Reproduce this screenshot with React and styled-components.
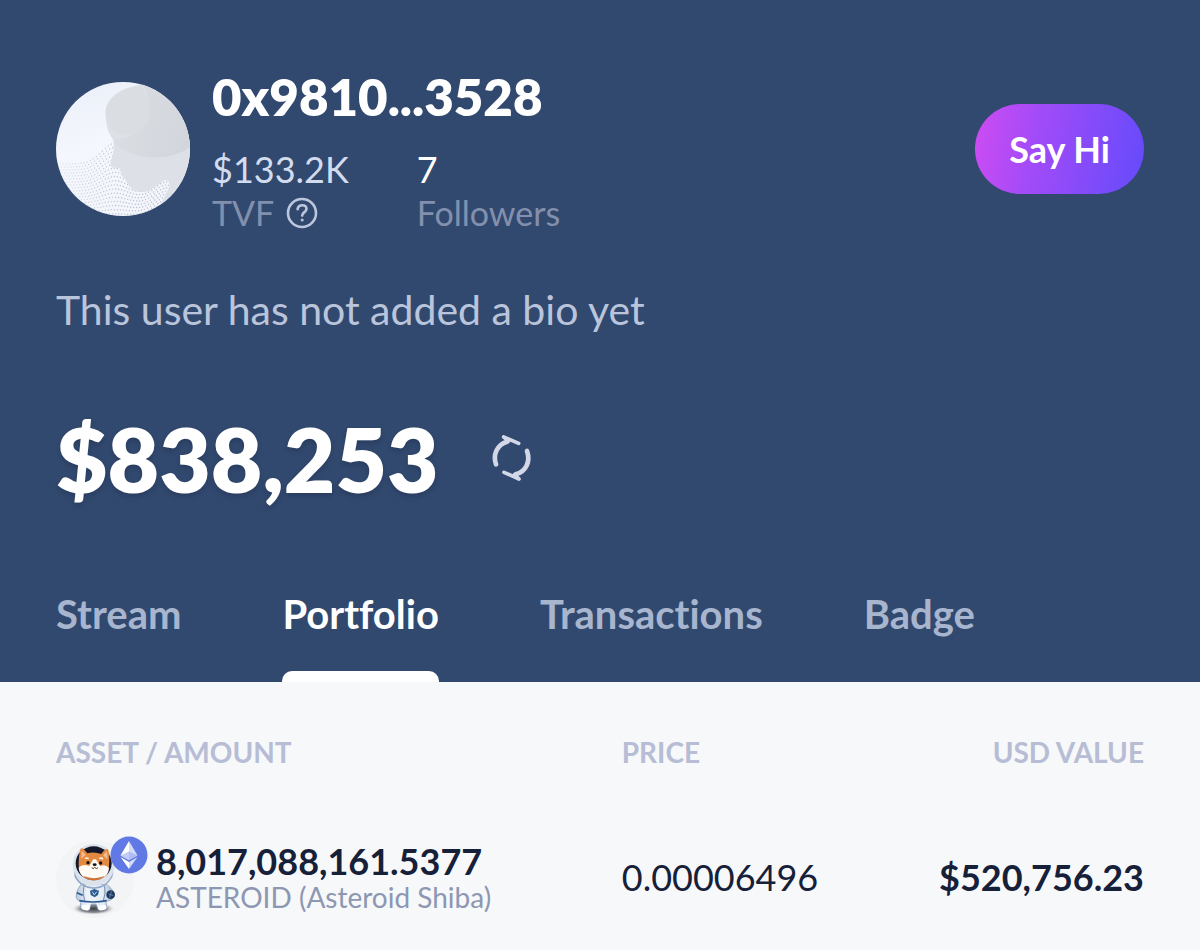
import React, { useState } from 'react'
import styled, { createGlobalStyle } from 'styled-components';

const GlobalStyle = createGlobalStyle`
    * {
        box-sizing: border-box;
    }

    body {
        margin: 0;
        background-color: #f6f8fa;
        font-family: Lato, "Liberation Sans", sans-serif;
        font-variant-ligatures: none;
    }
`;

const Header = styled.header`
    background-color: #32496f;
    padding: 67px 56px 0;
`;

const Profile = styled.div`
    display: flex;
    align-items: flex-start;
`;

const AvatarSvg = styled.svg`
    flex: none;
    width: 134px;
    height: 134px;
    margin-top: 15px;
    margin-right: 22px;
`;

const Identity = styled.div`
    flex: 1;
`;

const Address = styled.h1`
    margin: 0 0 20px;
    font-size: 51px;
    line-height: 60px;
    font-weight: 800;
    color: #ffffff;
`;

const Stats = styled.dl`
    display: flex;
    gap: 68px;
    margin: 0;
`;

const Stat = styled.div`
    display: flex;
    flex-direction: column-reverse;
`;

const StatValue = styled.dd`
    margin: 0;
    font-size: 36px;
    line-height: 44px;
    color: ${(props) => props.$color};
`;

const StatLabel = styled.dt`
    display: flex;
    align-items: center;
    gap: 12px;
    font-size: 34px;
    line-height: 44px;
    color: #8290ae;
`;

const HelpButton = styled.button`
    display: flex;
    padding: 0;
    border: none;
    background: none;
    color: #bcc7dd;
    cursor: pointer;
`;

const SayHi = styled.button`
    margin-top: 37px;
    padding: 0 34px;
    height: 90px;
    border: none;
    border-radius: 45px;
    background: linear-gradient(100deg, #cf4cf2 0%, #a34bf8 35%, #644bfb 100%);
    color: #ffffff;
    font-family: inherit;
    font-size: 36px;
    font-weight: 700;
    cursor: pointer;
`;

const Bio = styled.p`
    margin: 49px 0 0;
    font-size: 41px;
    line-height: 52px;
    color: #bac5db;
`;

const Balance = styled.div`
    display: flex;
    align-items: center;
    gap: 52px;
    margin-top: 70px;
`;

const Total = styled.div`
    font-size: 89px;
    line-height: 106px;
    font-weight: 800;
    color: #ffffff;
    text-shadow: 0 3px 5px rgba(20, 32, 60, 0.3);
`;

const RefreshButton = styled.button`
    display: flex;
    padding: 0;
    border: none;
    background: none;
    cursor: pointer;
`;

const Tabs = styled.nav`
    display: flex;
    gap: 101px;
    margin-top: 76px;
`;

const Tab = styled.button`
    display: flex;
    flex-direction: column;
    justify-content: space-between;
    height: 94px;
    padding: 0;
    border: none;
    background: none;
    font-family: inherit;
    font-variant-ligatures: inherit;
    font-size: 40px;
    line-height: 52px;
    font-weight: 700;
    color: ${(props) => (props.$active ? '#ffffff' : '#a8b5ce')};
    cursor: pointer;

    &::after {
        content: '';
        width: 100%;
        height: 11px;
        border-radius: 10px 10px 0 0;
        background-color: ${(props) => (props.$active ? '#ffffff' : 'transparent')};
    }
`;

const Holdings = styled.main`
    padding: 50px 56px 28px;
`;

const AssetTable = styled.table`
    width: 100%;
    table-layout: fixed;
    border-collapse: collapse;
`;

const HeadCell = styled.th`
    width: ${(props) => props.$width};
    padding: 0 0 64px;
    font-size: 28px;
    line-height: 40px;
    font-weight: 700;
    text-align: ${(props) => props.$align || 'left'};
    color: #b7bdd4;
`;

const Cell = styled.td`
    padding: 0;
    font-size: 36px;
    line-height: 44px;
    font-weight: ${(props) => (props.$bold ? 700 : 400)};
    text-align: ${(props) => props.$align || 'left'};
    color: #162039;
`;

const Asset = styled.div`
    display: flex;
    align-items: center;
    gap: 8px;
`;

const TokenIcon = styled.div`
    position: relative;
    flex: none;
    width: 92px;
    height: 82px;
`;

const ChainBadge = styled.svg`
    position: absolute;
    top: 0;
    right: 0;
    width: 38px;
    height: 38px;
`;

const Amount = styled.div`
    font-size: 36px;
    line-height: 40px;
    font-weight: 700;
    color: #162039;
`;

const TokenName = styled.div`
    font-size: 28px;
    line-height: 32px;
    color: #8d97b1;
`;

const tabs = ['Stream', 'Portfolio', 'Transactions', 'Badge'];

const assets = [
    {
        amount: '8,017,088,161.5377',
        name: 'ASTEROID (Asteroid Shiba)',
        price: '0.00006496',
        value: '$520,756.23'
    }
];

//rows of small dots that rise towards the face and the shoulder
const avatarDots = () => {
    let dots = [];
    for(let row = 0; row < 24; row++){
        for(let col = 0; col < 42; col++){
            const x = 22 + col * 9 + (row % 2) * 4;
            const face = 62 * Math.exp(-Math.pow((x - 195) / 55, 2)) * Math.max(0, 1 - row / 18);
            const shoulder = 45 * Math.exp(-Math.pow((x - 350) / 50, 2));
            const y = 258 + row * 9 - face - shoulder;
            dots.push({ x, y, opacity: Math.min(1, 0.2 + x / 260) });
        }
    }
    return dots;
}

const Avatar = () => (
    <AvatarSvg viewBox="18 12 402 402" aria-hidden="true">
        <defs>
            <clipPath id="avatarClip"><circle cx="219" cy="213" r="201" /></clipPath>
            <linearGradient id="avatarBg" x1="0" y1="0" x2="0.4" y2="1">
                <stop offset="0" stopColor="#eaeef7" />
                <stop offset="0.5" stopColor="#f4f7fd" />
                <stop offset="1" stopColor="#f3f5fa" />
            </linearGradient>
            <linearGradient id="avatarHead" x1="0" y1="0.3" x2="1" y2="0.6">
                <stop offset="0" stopColor="#dbdee3" />
                <stop offset="1" stopColor="#d2d6dc" />
            </linearGradient>
        </defs>
        <g clipPath="url(#avatarClip)">
            <rect x="18" y="12" width="402" height="402" fill="url(#avatarBg)" />
            <g fill="#b9bfd5">
                {
                    avatarDots().map((dot, i) => <circle key={i} cx={dot.x} cy={dot.y} r="2.1" opacity={dot.opacity} />)
                }
            </g>
            <path
                d="M276 20 C208 28 167 62 167 105 C167 145 175 165 190 187 C194 212 190 232 182 250 C179 264 184 269 192 269 L213 271 C210 285 212 291 220 298 C230 306 230 316 238 324 C248 338 262 343 282 342 C304 338 322 322 336 311 C350 301 362 308 357 328 C348 352 334 372 318 410 L440 420 L440 0 Z"
                fill="#dde0e6"
            />
            <path d="M272 6 C312 70 306 140 250 170 C224 182 204 180 190 187 C200 212 262 244 336 238 C372 234 404 220 430 202 L430 6 Z" fill="url(#avatarHead)" />
            <path d="M276 24 C212 28 167 62 167 105 C167 142 190 168 226 172 C272 168 304 136 299 92 C297 66 280 42 276 24 Z" fill="#dadde2" />
        </g>
    </AvatarSvg>
);

const HelpIcon = () => (
    <svg width="32" height="32" viewBox="0 0 32 32" fill="none" stroke="currentColor" strokeWidth="2.6" strokeLinecap="round">
        <circle cx="16" cy="16" r="14" />
        <path d="M11.6 12.3 C12 9.6 13.8 8.3 16.1 8.3 C18.7 8.3 20.5 9.8 20.5 12 C20.5 15 16.2 15.3 16.2 18.6" />
        <circle cx="16.2" cy="23" r="0.6" fill="currentColor" strokeWidth="1.8" />
    </svg>
);

const RefreshIcon = () => (
    <svg width="42" height="50" viewBox="24 18 126 150" fill="none" stroke="#d3d8e8" strokeLinecap="round" strokeLinejoin="round">
        <path strokeWidth="14" d="M39 109 C29 80 42 50 72 41" />
        <path strokeWidth="11" d="M62 27 L76 40 M62 27 L107 46" />
        <path strokeWidth="14" d="M132 69 C143 100 130 130 98 139" />
        <path strokeWidth="11" d="M108 153 L95 140 M63 133 L108 153" />
    </svg>
);

const ShibaIcon = () => (
    <svg width="92" height="82" viewBox="12 12 276 246" aria-hidden="true">
        <defs>
            <radialGradient id="shibaShadow">
                <stop offset="0" stopColor="#3d3f47" />
                <stop offset="0.6" stopColor="#8b8d94" />
                <stop offset="1" stopColor="#f1f2f5" stopOpacity="0" />
            </radialGradient>
            <linearGradient id="shibaSuit" x1="0" y1="0" x2="1" y2="0">
                <stop offset="0" stopColor="#b4c4da" />
                <stop offset="0.3" stopColor="#eff4fa" />
                <stop offset="0.7" stopColor="#e6edf5" />
                <stop offset="1" stopColor="#9db1cd" />
            </linearGradient>
        </defs>
        <circle cx="129" cy="141" r="117" fill="#f3f4f6" />
        <ellipse cx="124" cy="230" rx="66" ry="19" fill="url(#shibaShadow)" />
        <path d="M88 156 Q74 170 72 194 Q74 206 86 208 L86 228 Q98 238 112 232 L118 216 L132 216 L138 232 Q152 238 164 228 L162 208 Q182 206 186 190 Q184 172 166 158 Z" fill="url(#shibaSuit)" stroke="#7f95b5" strokeWidth="2" />
        <path d="M96 160 Q90 185 98 206 M158 162 Q162 185 154 206" stroke="#6f8db3" strokeWidth="3" fill="none" />
        <path d="M74 182 L92 190 M82 206 Q124 214 164 206" stroke="#2b5a90" strokeWidth="5" fill="none" />
        <circle cx="176" cy="188" r="13" fill="#1f3a61" />
        <path d="M169 186 L184 191 M178 178 L173 197" stroke="#7d9dc5" strokeWidth="2" />
        <path d="M114 176 L127 171 L141 176 L138 189 L128 196 L116 189 Z" fill="#2c5b92" />
        <path d="M121 179 L127 189 L134 179" stroke="#c5d8ec" strokeWidth="3" fill="none" />
        <path d="M96 226 L106 228 M146 228 L156 226" stroke="#ffffff" strokeWidth="15" strokeLinecap="round" />
        <circle cx="125" cy="99" r="63" fill="#dbe2ec" />
        <path d="M66 118 Q82 164 126 166 Q168 164 185 118 L181 136 Q160 172 125 171 Q86 169 68 136 Z" fill="#93a8c6" />
        <ellipse cx="125" cy="94" rx="54" ry="51" fill="#131728" />
        <path d="M86 50 Q92 44 106 64 Q126 58 148 66 Q160 48 168 52 Q174 70 171 98 Q172 140 126 145 Q80 140 80 100 Q80 66 86 50 Z" fill="#e38a40" />
        <path d="M89 56 L101 68 L88 80 Z M165 58 L153 70 L166 82 Z" fill="#f2bd93" />
        <path d="M80 108 Q90 94 112 102 L124 82 L132 82 L144 102 Q162 96 171 108 Q168 141 126 145 Q84 141 80 108 Z" fill="#fffaf4" />
        <path d="M94 132 Q126 145 158 132 Q146 145 126 145 Q104 145 94 132 Z" fill="#cf7436" />
        <path d="M99 80 Q105 76 110 80 M142 80 Q147 76 153 81" stroke="#fff1e2" strokeWidth="5" fill="none" />
        <ellipse cx="108" cy="92" rx="5" ry="5" fill="#15131a" />
        <ellipse cx="146" cy="93" rx="5" ry="5" fill="#15131a" />
        <ellipse cx="128" cy="98" rx="6" ry="4" fill="#15131a" />
        <path d="M119 107 Q124 113 128 106 Q133 113 138 107" stroke="#53342a" strokeWidth="3" fill="none" />
    </svg>
);

const EthereumBadge = () => (
    <ChainBadge viewBox="0 0 38 38" aria-hidden="true">
        <circle cx="19" cy="19" r="18.5" fill="#6079e4" />
        <path d="M19 5 L10.5 19.4 L19 24.3 Z" fill="#ffffff" />
        <path d="M19 5 L27.5 19.4 L19 24.3 Z" fill="#d3dbfa" />
        <path d="M19 15.4 L10.5 19.4 L19 24.3 L27.5 19.4 Z" fill="#8fa3f0" fillOpacity="0.55" />
        <path d="M10.5 21 L19 26 L19 33 Z" fill="#ffffff" />
        <path d="M27.5 21 L19 26 L19 33 Z" fill="#d3dbfa" />
    </ChainBadge>
);

const App = () => {
    const [activeTab, setActiveTab] = useState('Portfolio');

    return (
        <>
            <GlobalStyle />
            <Header>
                <Profile>
                    <Avatar />
                    <Identity>
                        <Address>0x9810...3528</Address>
                        <Stats>
                            <Stat>
                                <StatLabel>
                                    TVF
                                    <HelpButton aria-label="About TVF"><HelpIcon /></HelpButton>
                                </StatLabel>
                                <StatValue $color="#d3dcee">$133.2K</StatValue>
                            </Stat>
                            <Stat>
                                <StatLabel>Followers</StatLabel>
                                <StatValue $color="#ffffff">7</StatValue>
                            </Stat>
                        </Stats>
                    </Identity>
                    <SayHi>Say Hi</SayHi>
                </Profile>
                <Bio>This user has not added a bio yet</Bio>
                <Balance>
                    <Total>$838,253</Total>
                    <RefreshButton aria-label="Refresh"><RefreshIcon /></RefreshButton>
                </Balance>
                <Tabs>
                    {
                        tabs.map((tab) => (
                            <Tab key={tab} $active={tab === activeTab} onClick={() => setActiveTab(tab)}>
                                {tab}
                            </Tab>
                        ))
                    }
                </Tabs>
            </Header>
            <Holdings>
                <AssetTable>
                    <thead>
                        <tr>
                            <HeadCell $width="52%">ASSET / AMOUNT</HeadCell>
                            <HeadCell $width="24%">PRICE</HeadCell>
                            <HeadCell $width="24%" $align="right">USD VALUE</HeadCell>
                        </tr>
                    </thead>
                    <tbody>
                        {
                            assets.map((asset) => (
                                <tr key={asset.name}>
                                    <Cell>
                                        <Asset>
                                            <TokenIcon>
                                                <ShibaIcon />
                                                <EthereumBadge />
                                            </TokenIcon>
                                            <div>
                                                <Amount>{asset.amount}</Amount>
                                                <TokenName>{asset.name}</TokenName>
                                            </div>
                                        </Asset>
                                    </Cell>
                                    <Cell>{asset.price}</Cell>
                                    <Cell $bold $align="right">{asset.value}</Cell>
                                </tr>
                            ))
                        }
                    </tbody>
                </AssetTable>
            </Holdings>
        </>
    );
}

export default App;
